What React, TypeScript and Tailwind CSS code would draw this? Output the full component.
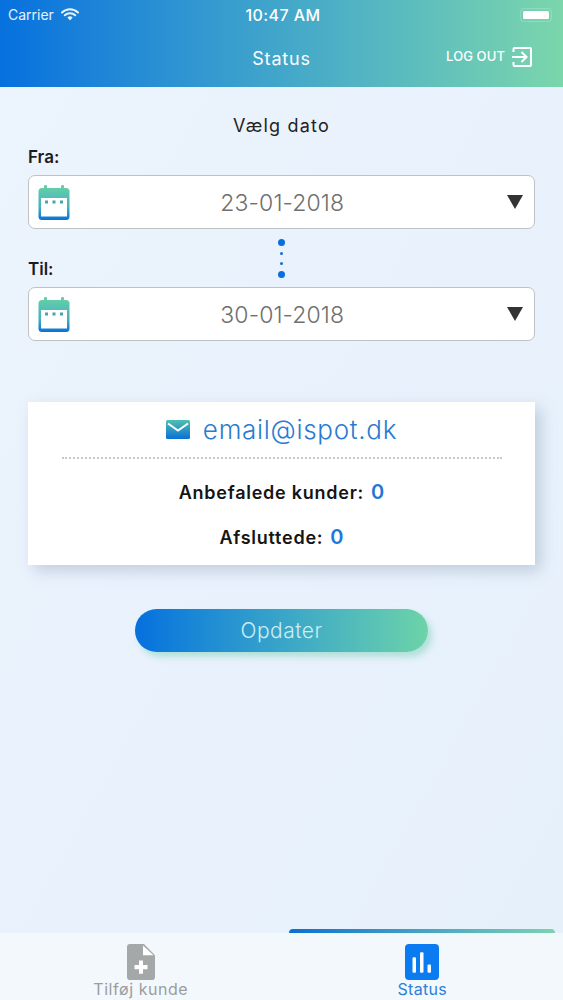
import { useId } from 'react';

function CalendarIcon() {
    const id = useId();
    return (
        <svg width="32" height="35" viewBox="0 0 32 35" className="shrink-0">
            <defs>
                <linearGradient id={id} x1="0" y1="0" x2="0" y2="1">
                    <stop offset="0" stopColor="#62cda8" />
                    <stop offset="0.6" stopColor="#45b0c0" />
                    <stop offset="1" stopColor="#0a70d8" />
                </linearGradient>
            </defs>
            <rect x="6" y="0" width="3" height="6" rx="1.2" fill="#62cda8" />
            <rect x="23" y="0" width="3" height="6" rx="1.2" fill="#62cda8" />
            <rect x="0.5" y="3" width="31" height="32" rx="3.5" fill={`url(#${id})`} />
            <rect x="3" y="13" width="26" height="18.5" fill="#fff" />
            <rect x="7" y="15.500" width="3" height="3" fill="#45a5b5" />
            <rect x="14.500" y="15.500" width="3" height="3" fill="#45a5b5" />
            <rect x="22" y="15.500" width="3" height="3" fill="#45a5b5" />
        </svg>
    );
}

function DateSelect({ value }: { value: string }) {
    return (
        <div className="h-[54px] bg-white border-[1.5px] border-[#bfc2c4] rounded-[7px] flex items-center pl-[8.5px] pr-[11px]">
            <CalendarIcon />
            <span className="flex-1 text-center text-[23px] font-light tracking-[0.1px] text-[#6f6f6f] pr-[12px] pt-[3px]">{value}</span>
            <svg width="16" height="14" viewBox="0 0 16 14" className="shrink-0">
                <path d="M0 0H16L8 14Z" fill="#333" />
            </svg>
        </div>
    );
}

export default function App() {
    return (
        <div className="w-[563px] h-[1000px] flex flex-col overflow-hidden bg-gradient-to-br from-[#ecf4fd] to-[#e6f0fb] font-['Inter',sans-serif]">
            <header className="h-[87px] shrink-0 text-white bg-gradient-to-r from-[#0670de] to-[#7bd6ab]">
                <div className="h-[29px] px-[8px] grid grid-cols-3 items-center text-[14px]">
                    <div className="flex items-center gap-[7px] opacity-90">
                        <span>Carrier</span>
                        <svg width="18" height="13" viewBox="0 0 18 13">
                            <path d="M1 4.500a11.500 11.500 0 0 1 16 0M3.800 7.300a7.500 7.500 0 0 1 10.400 0" fill="none" stroke="#fff" strokeWidth="2" strokeLinecap="round" />
                            <path d="M6.400 9.600a3.700 3.700 0 0 1 5.200 0L9 12.400Z" fill="#fff" />
                        </svg>
                    </div>
                    <div className="text-center text-[16px] font-medium tracking-[0.4px] whitespace-nowrap pl-[3px]">10:47 AM</div>
                    <div className="flex justify-end pr-[3px]">
                        <div className="w-[32px] h-[14px] rounded-[4px] border border-white/20 p-[2px]">
                            <div className="h-full bg-white rounded-[1.5px]" />
                        </div>
                    </div>
                </div>
                <div className="h-[58px] grid grid-cols-3 items-center pt-[1px]">
                    <div />
                    <div className="text-center text-[18px] tracking-[0.8px]">Status</div>
                    <div className="flex justify-end items-center gap-[7px] pr-[31px] pb-[4px]">
                        <span className="text-[13px] font-medium tracking-[0.1px] whitespace-nowrap">LOG OUT</span>
                        <svg width="20" height="20" viewBox="0 0 20 20" fill="none" stroke="#fff" strokeWidth="2">
                            <path d="M1.500 5V2a1 1 0 0 1 1-1h15.500a1 1 0 0 1 1 1v16a1 1 0 0 1-1 1H2.500a1 1 0 0 1-1-1v-3" />
                            <path d="M0 10H14M9.500 5l5 5-5 5" />
                        </svg>
                    </div>
                </div>
            </header>

            <main className="flex-1 flex flex-col px-[28px] min-h-0">
                <div className="text-center text-[18px] tracking-[1.2px] text-[#222] mt-[28px] leading-[22px]">Vælg dato</div>
                <div className="text-[17px] font-semibold text-[#1c1c1c] leading-[20px] mt-[10px] mb-[8px]">Fra:</div>
                <DateSelect value="23-01-2018" />
                <div className="h-[58px] grid grid-cols-[1fr_auto_1fr]">
                    <div className="self-end text-[17px] font-semibold text-[#1c1c1c] leading-[20px] mb-[8px]">Til:</div>
                    <div className="flex flex-col items-center justify-between h-[40px] mt-[9.500px]">
                        <span className="w-[7px] h-[7px] rounded-full bg-[#0a6fdc]" />
                        <span className="w-[3px] h-[3px] rounded-full bg-[#0a6fdc]" />
                        <span className="w-[3px] h-[3px] rounded-full bg-[#0a6fdc]" />
                        <span className="w-[7px] h-[7px] rounded-full bg-[#0a6fdc]" />
                    </div>
                    <div />
                </div>
                <DateSelect value="30-01-2018" />

                <section className="mt-[61px] h-[163px] bg-white shadow-[6px_6px_14px_rgba(120,140,165,0.35)] flex flex-col items-center">
                    <div className="h-[55px] flex items-center gap-[13px]">
                        <svg width="24" height="19" viewBox="0 0 24 19">
                            <defs>
                                <linearGradient id="mail" x1="0" y1="0" x2="0" y2="1">
                                    <stop offset="0" stopColor="#4fc0b0" />
                                    <stop offset="1" stopColor="#0a70d8" />
                                </linearGradient>
                            </defs>
                            <rect width="24" height="19" rx="1.500" fill="url(#mail)" />
                            <path d="M2 3.500l10 7 10-7" fill="none" stroke="#fff" strokeWidth="2" />
                        </svg>
                        <span className="text-[26px] font-light text-[#2a7bd0] tracking-[0.7px]">email@ispot.dk</span>
                    </div>
                    <div className="w-[440px] border-t-2 border-dotted border-[#c8c8c8]" />
                    <div className="mt-[21px] h-[24px] flex items-center gap-[7px]">
                        <span className="text-[18px] font-semibold tracking-[0.75px] text-[#151515]">Anbefalede kunder:</span>
                        <span className="text-[20px] font-semibold text-[#1f78d6]">0</span>
                    </div>
                    <div className="mt-[21px] h-[24px] flex items-center gap-[7px]">
                        <span className="text-[18px] font-semibold tracking-[0.75px] text-[#151515]">Afsluttede:</span>
                        <span className="text-[20px] font-semibold text-[#1f78d6]">0</span>
                    </div>
                </section>

                <button className="mt-[44px] self-center w-[293px] h-[43px] rounded-full text-[21px] font-light tracking-[0.5px] text-[#cdeef2] bg-gradient-to-r from-[#0670de] to-[#6dd3a8] shadow-[4px_5px_6px_rgba(110,205,175,0.45)]">
                    Opdater
                </button>

                <div className="mt-auto ml-[261px] mr-[-20px] h-[4px] rounded-t-[4px] bg-gradient-to-r from-[#0a6fd0] to-[#7bd3ae]" />
            </main>

            <nav className="h-[67px] shrink-0 bg-[#f3f8fd] grid grid-cols-2">
                <div className="flex flex-col items-center pt-[11px]">
                    <svg width="28" height="36" viewBox="0 0 28 35" preserveAspectRatio="none">
                        <path d="M3 0H17L28 11V32a3 3 0 0 1-3 3H3a3 3 0 0 1-3-3V3a3 3 0 0 1 3-3Z" fill="#a5a8a8" />
                        <path d="M16 1.500V11H26.500Z" fill="#fff" />
                        <path d="M14 16V29M7.500 22.500H20.500" stroke="#fff" strokeWidth="4" />
                    </svg>
                    <span className="text-[16px] leading-[18px] text-[#9a9d9e] tracking-[0.55px]">Tilføj kunde</span>
                </div>
                <div className="flex flex-col items-center pt-[11px]">
                    <svg width="34" height="36" viewBox="0 0 34 35" preserveAspectRatio="none">
                        <rect width="34" height="35" rx="4" fill="#0a7bf0" />
                        <rect x="7.500" y="13" width="3.500" height="15" rx="1" fill="#fff" />
                        <rect x="15" y="8" width="3.500" height="20" rx="1" fill="#fff" />
                        <rect x="22.500" y="20" width="3.500" height="8" rx="1" fill="#fff" />
                    </svg>
                    <span className="text-[16px] leading-[18px] text-[#2d7fd8] tracking-[0.3px]">Status</span>
                </div>
            </nav>
        </div>
    );
}
